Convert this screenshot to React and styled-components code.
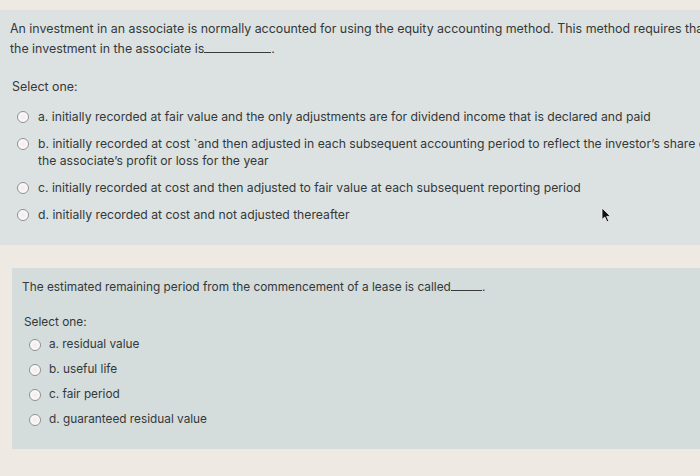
import React from "react";
import styled, { createGlobalStyle } from "styled-components";

const Global = createGlobalStyle`
  html, body { margin: 0; padding: 0; }
  body {
    background: #efe9e3;
    overflow: hidden;
    width: 700px;
    height: 476px;
    font-family: Inter, "Liberation Sans", Arial, sans-serif;
    color: #33383a;
  }
`;

const Page = styled.div`
  position: relative;
  width: 700px;
  height: 476px;
  overflow: hidden;
  padding-top: 10px;
  box-sizing: border-box;
  display: flex;
  flex-direction: column;
`;

const Card = styled.section`
  box-sizing: border-box;
  flex: none;
  margin-left: ${(p) => p.$left}px;
  margin-top: ${(p) => p.$top}px;
  width: ${(p) => p.$width}px;
  height: ${(p) => p.$height}px;
  padding: ${(p) => p.$padTop}px 0 0 ${(p) => p.$padLeft}px;
  background: ${(p) => p.$bg};
  font-size: ${(p) => p.$fs}px;
`;

const Question = styled.div`
  line-height: ${(p) => p.$lh}px;
  white-space: nowrap;
`;

const Blank = styled.span`
  display: inline-block;
  width: ${(p) => p.$w}px;
  border-bottom: 1px solid #3a3a3a;
  height: 12px;
  vertical-align: baseline;
`;

const SelectLabel = styled.div`
  line-height: 18px;
  margin-top: ${(p) => p.$mt}px;
  margin-left: 2px;
`;

const Options = styled.div`
  display: flex;
  flex-direction: column;
  gap: ${(p) => p.$gap}px;
  margin-top: ${(p) => p.$mt}px;
  margin-left: 7px;
  font-size: ${(p) => p.$fs}px;
`;

const Option = styled.label`
  display: flex;
  align-items: flex-start;
  gap: ${(p) => p.$gap}px;
  line-height: 17px;
  white-space: nowrap;
`;

const Radio = styled.span`
  flex: none;
  box-sizing: border-box;
  width: 12px;
  height: 12px;
  margin-top: 2.5px;
  border-radius: 50%;
  border: 1.5px solid #8e9192;
  background: radial-gradient(circle at 50% 50%, #f3e9ea 0%, #fbf8f8 60%, #ffffff 100%);
`;

const Cursor = styled.svg`
  position: absolute;
  left: 601px;
  top: 207px;
`;

const q1 = [
  ["a. initially recorded at fair value and the only adjustments are for dividend income that is declared and paid"],
  [
    "b. initially recorded at cost `and then adjusted in each subsequent accounting period to reflect the investor\u2019s share of",
    "the associate\u2019s profit or loss for the year",
  ],
  ["c. initially recorded at cost and then adjusted to fair value at each subsequent reporting period"],
  ["d. initially recorded at cost and not adjusted thereafter"],
];

const q2 = [
  "a. residual value",
  "b. useful life",
  "c. fair period",
  "d. guaranteed residual value",
];

export default function App() {
  return (
    <>
      <Global />
      <Page>
        <Card $left={0} $top={0} $width={760} $height={235} $padTop={9} $padLeft={10} $bg="#dce2e1" $fs={12.4}>
          <Question $lh={20}>
            An investment in an associate is normally accounted for using the equity accounting method. This method requires that
            <br />
            the investment in the associate is<Blank $w={67} />.
          </Question>
          <SelectLabel $mt={19}>Select one:</SelectLabel>
          <Options $gap={10} $mt={12} $fs={12.2}>
            {q1.map((lines) => (
              <Option key={lines[0]} $gap={9}>
                <Radio />
                <span>
                  {lines.map((l, i) => (
                    <React.Fragment key={l}>
                      {i > 0 && <br />}
                      {l}
                    </React.Fragment>
                  ))}
                </span>
              </Option>
            ))}
          </Options>
        </Card>
        <Card $left={12} $top={23} $width={700} $height={181} $padTop={10} $padLeft={10} $bg="#d4dddc" $fs={11.85}>
          <Question $lh={18}>
            The estimated remaining period from the commencement of a lease is called<Blank $w={31} />.
          </Question>
          <SelectLabel $mt={17}>Select one:</SelectLabel>
          <Options $gap={8} $mt={5} $fs={11.8}>
            {q2.map((t) => (
              <Option key={t} $gap={8}>
                <Radio />
                <span>{t}</span>
              </Option>
            ))}
          </Options>
        </Card>
        <Cursor width="12" height="16" viewBox="0 0 12 16">
          <path d="M1 1 L1 12.5 L3.8 10 L6 14.8 L7.8 14 L5.7 9.4 L9.5 9.4 Z" fill="#111" stroke="#f4f4f4" strokeWidth="0.8" />
        </Cursor>
      </Page>
    </>
  );
}
